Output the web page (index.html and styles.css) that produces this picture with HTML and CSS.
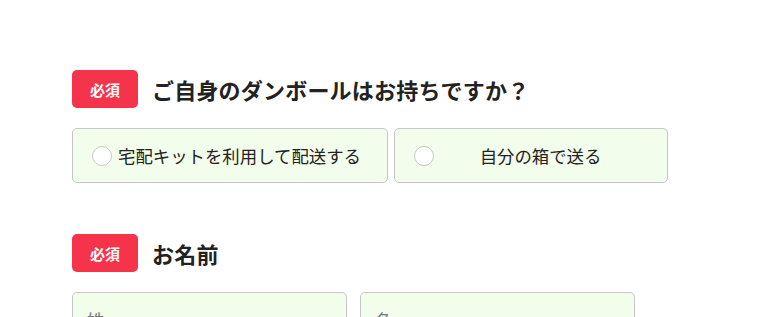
FILE: index.html
```html
<!DOCTYPE html>
<html lang="ja">
<head>
<meta charset="utf-8">
<link rel="stylesheet" href="styles.css">
</head>
<body>
<div class="form">
  <section class="field">
    <div class="field-head">
      <span class="badge">必須</span>
      <h2 class="field-title">ご自身のダンボールはお持ちですか？</h2>
    </div>
    <div class="choices">
      <label class="choice choice-wide">
        <span class="radio"></span>
        <span class="choice-text">宅配キットを利用して配送する</span>
      </label>
      <label class="choice choice-narrow">
        <span class="radio"></span>
        <span class="choice-text">自分の箱で送る</span>
      </label>
    </div>
  </section>
  <section class="field">
    <div class="field-head">
      <span class="badge">必須</span>
      <h2 class="field-title">お名前</h2>
    </div>
    <div class="inputs">
      <input class="text-input" type="text" placeholder="姓">
      <input class="text-input" type="text" placeholder="名">
    </div>
  </section>
</div>
</body>
</html>
```
FILE: styles.css
```css
* { box-sizing: border-box; }
html, body {
  margin: 0;
  background: #ffffff;
}
body {
  font-family: "Noto Sans CJK JP", "Noto Sans", sans-serif;
  color: #222222;
}
.form {
  padding: 70px 0 0 72px;
  display: flex;
  flex-direction: column;
  gap: 51px;
}
.field {
  display: flex;
  flex-direction: column;
  gap: 20px;
}
.field-head {
  display: flex;
  align-items: center;
  gap: 14px;
  height: 38px;
}
.badge {
  width: 66px;
  height: 38px;
  border-radius: 5px;
  background: #f5334a;
  color: #ffffff;
  font-size: 15px;
  font-weight: 700;
  display: flex;
  align-items: center;
  justify-content: center;
  flex: none;
}
.field-title {
  margin: 0;
  font-size: 22px;
  letter-spacing: 0.2px;
  font-weight: 700;
  color: #222222;
  line-height: 1;
}
.choices {
  display: flex;
  gap: 6px;
}
.choice {
  height: 55px;
  border: 1px solid #c6c6c6;
  border-radius: 5px;
  background: #f3fdeb;
  display: flex;
  align-items: center;
  padding: 0 26px 0 19px;
}
.choice-wide { width: 316px; }
.choice-narrow { width: 274px; }
.radio {
  width: 20px;
  height: 20px;
  border-radius: 50%;
  border: 1px solid #c8c8c8;
  background: #ffffff;
  flex: none;
}
.choice-text {
  flex: 1;
  margin-left: 6px;
  text-align: center;
  white-space: nowrap;
  font-size: 17.4px;
  color: #222222;
}
.inputs {
  display: flex;
  gap: 13px;
}
.text-input {
  width: 275px;
  height: 55px;
  border: 1px solid #c6c6c6;
  border-radius: 5px;
  background: #f3fdeb;
  padding: 0 14px;
  font-family: "Noto Sans CJK JP", "Noto Sans", sans-serif;
  font-size: 17.4px;
  color: #222222;
  outline: none;
}
.text-input::placeholder {
  color: #777777;
}
```
